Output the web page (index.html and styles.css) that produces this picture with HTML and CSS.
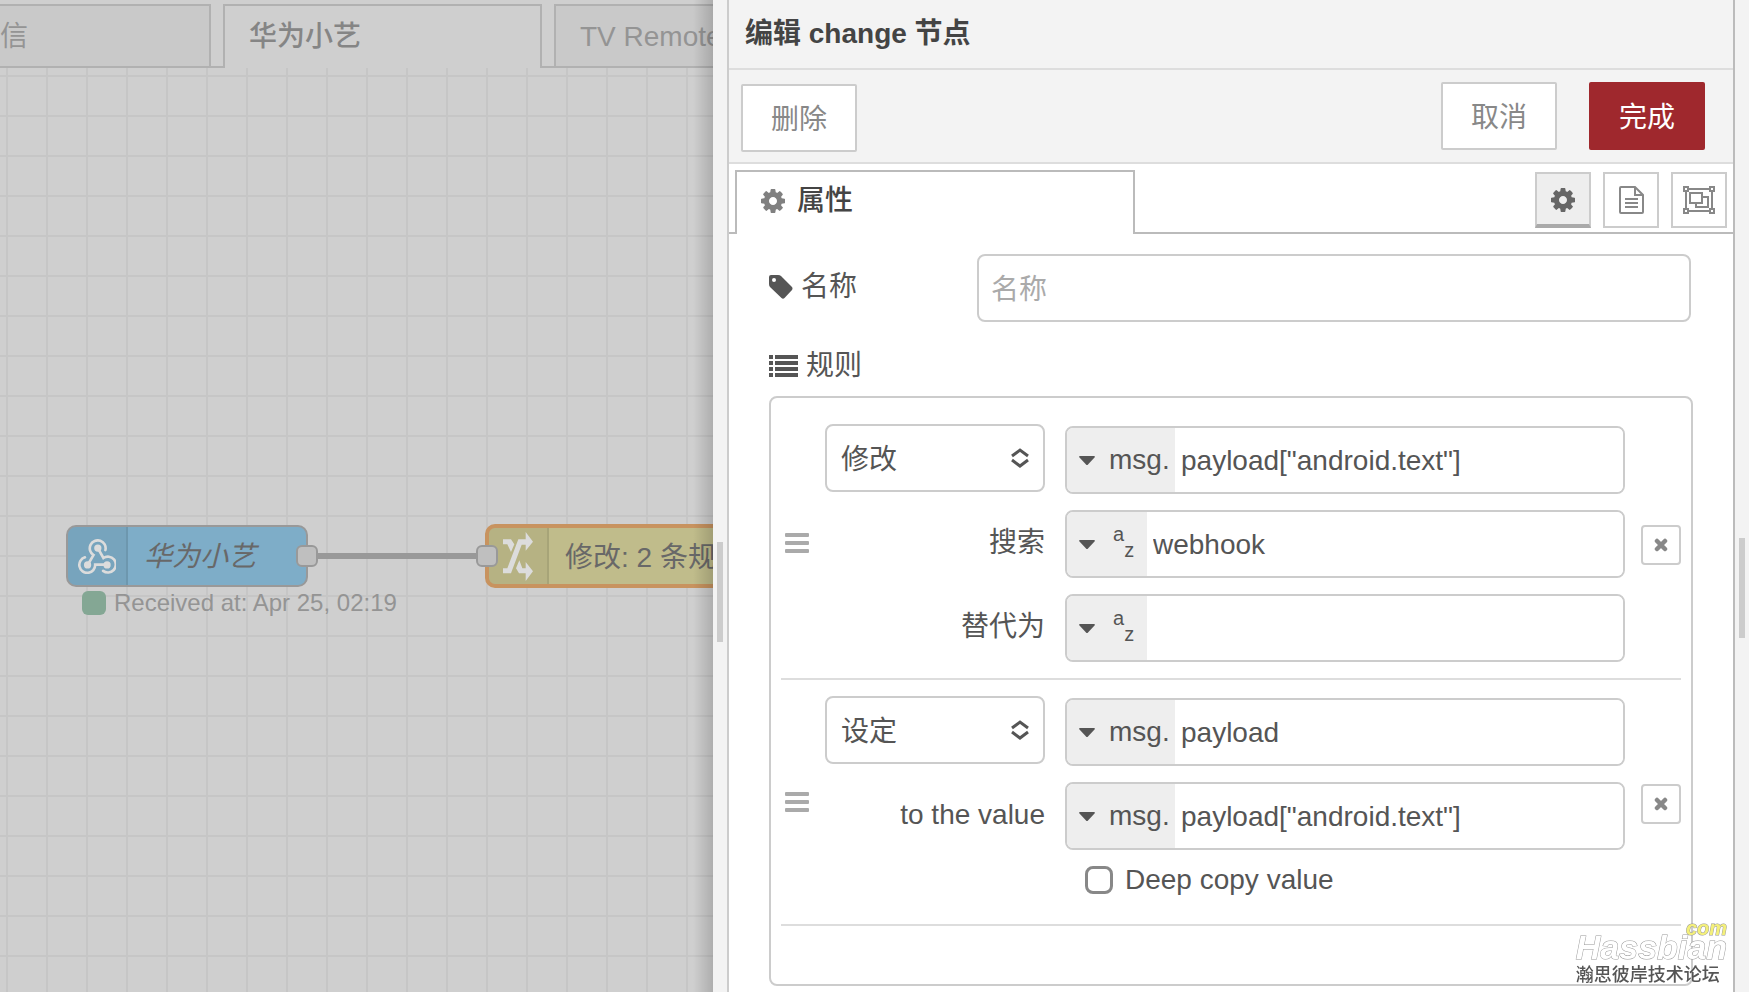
FILE: index.html
```html
<!DOCTYPE html>
<html lang="zh-CN">
<head>
<meta charset="utf-8">
<title>编辑 change 节点</title>
<link rel="stylesheet" href="styles.css">
</head>
<body>
<svg class="defs" aria-hidden="true">
  <symbol id="cog" viewBox="0 128 1536 1536"><path d="M1024 896q0-106-75-181t-181-75-181 75-75 181 75 181 181 75 181-75 75-181zm512-109v222q0 12-8 23t-20 13l-185 28q-19 54-39 91 35 50 107 138 10 12 10 25t-9 23q-27 37-99 108t-94 71q-12 0-26-9l-138-108q-44 23-91 38-16 136-29 186-7 28-36 28h-222q-14 0-24.500-8.500t-11.500-21.500l-28-184q-49-16-90-37l-141 107q-10 9-25 9-14 0-25-11-126-114-165-168-7-10-7-23 0-12 8-23 15-21 51-66.500t54-70.500q-27-50-41-99l-183-27q-13-2-21-12.500t-8-23.500v-222q0-12 8-23t19-13l186-28q14-46 39-92-40-57-107-138-10-12-10-24 0-10 9-23 26-36 98.500-107.500t94.500-71.500q13 0 26 10l138 107q44-23 91-38 16-136 29-186 7-28 36-28h222q14 0 24.500 8.500t11.500 21.500l28 184q49 16 90 37l142-107q9-9 24-9 13 0 25 10 129 119 165 170 7 8 7 22 0 12-8 23-15 21-51 66.500t-54 70.500q26 50 41 98l183 28q13 2 21 12.500t8 23.500z"/></symbol>
  <symbol id="caret" viewBox="0 0 16 9"><path d="M1 0h14q1.500.3.500 1.500L9 8.500q-1 1-2 0L.5 1.500Q-.5.3 1 0z"/></symbol>
  <symbol id="bars" viewBox="0 0 24 20"><rect width="24" height="4" rx="1"/><rect y="8" width="24" height="4" rx="1"/><rect y="16" width="24" height="4" rx="1"/></symbol>
  <symbol id="cross" viewBox="0 0 14 14"><path d="M3 3l8 8M11 3l-8 8" fill="none" stroke="currentColor" stroke-width="4.500" stroke-linecap="round"/></symbol>
</svg>
<div class="editor">
  <main class="workspace">
    <nav class="flow-tabs">
      <a class="flow-tab flow-tab-first" href="#">信</a>
      <a class="flow-tab flow-tab-active" href="#">华为小艺</a>
      <a class="flow-tab flow-tab-last" href="#">TV Remote</a>
    </nav>
    <div class="canvas">
      <div class="wire"></div>
      <div class="node node-webhook">
        <span class="node-icon"><svg width="38" height="35" viewBox="0 0 115 105" fill="none" stroke="#dcdcdc" stroke-width="8" stroke-linecap="round"><path d="M83 33A24 24 0 1 0 47 48L30 77"/><path d="M60 27L77 57A24 24 0 1 1 76 96"/><path d="M87 77H52A24 24 0 1 1 21 55"/><g fill="#dcdcdc" stroke="none"><circle cx="60" cy="27" r="11"/><circle cx="29" cy="78" r="11"/><circle cx="88" cy="78" r="11"/></g></svg></span>
        <span class="node-label"><em>华为小艺</em></span>
      </div>
      <div class="port port-out"></div>
      <div class="node node-change">
        <span class="node-icon"><svg width="30" height="49" viewBox="0 0 90 147" fill="#dcdcdc"><path d="M0 124V109H13L46 22H68V0L90 29 68 56V38H56L24 124z"/><path d="M0 22H24L34 37 24 60 13 37H0z"/><path d="M49 85L58 109H68V90L90 118 68 147V124H48L39 109z"/></svg></span>
        <span class="node-label">修改: 2 条规则</span>
      </div>
      <div class="port port-in"></div>
      <div class="status"><i class="status-dot"></i>Received at: Apr 25, 02:19</div>
    </div>
  </main>
  <div class="splitter"></div>
  <section class="tray">
    <h1 class="tray-title">编辑 change 节点</h1>
    <div class="toolbar">
      <button class="btn btn-delete">删除</button>
      <button class="btn">取消</button>
      <button class="btn btn-primary">完成</button>
    </div>
    <div class="tabs">
      <div class="tab"><svg class="tab-icon" width="24" height="24"><use href="#cog"/></svg>属性</div>
      <div class="tab-tools">
        <button class="tool tool-on" aria-label="属性"><svg width="24" height="24"><use href="#cog"/></svg></button>
        <button class="tool" aria-label="描述"><svg width="25" height="28" viewBox="0 0 25 28" fill="none" stroke="currentColor" stroke-width="2"><path d="M2 1H16L24 9V26Q24 27 23 27H2Q1 27 1 26V2Q1 1 2 1zM16 1V9H24M6 13H19M6 17H19M6 21H19"/></svg></button>
        <button class="tool" aria-label="外观"><svg width="32" height="28" viewBox="0 0 32 28" fill="none" stroke="currentColor" stroke-width="2"><path d="M6 3H26M6 25H26M3 6V22M29 6V22M1 1H5V5H1zM27 1H31V5H27zM1 23H5V27H1zM27 23H31V27H27zM7 7H19V17H7zM20 11H25V21H13V18"/></svg></button>
      </div>
    </div>
    <form class="form">
      <div class="name-row">
        <label class="form-label name-label" for="name"><svg width="24" height="24" viewBox="0 0 24 24"><path fill-rule="evenodd" d="M0 2Q0 0 2 0H9Q11 0 12 1L23 12Q24 13.500 23 15L15.500 23Q14 24.500 12.500 23L1 12Q0 11 0 9zM5 3A2 2 0 1 0 5 7A2 2 0 1 0 5 3z"/></svg>名称</label>
        <input class="name-input" id="name" type="text" placeholder="名称">
      </div>
      <div class="form-label rules-label"><svg width="29" height="22" viewBox="0 0 29 22"><path d="M0 0H4V4H0zM6 0H29V4H6zM0 6H4V10H0zM6 6H29V10H6zM0 12H4V16H0zM6 12H29V16H6zM0 18H4V22H0zM6 18H29V22H6z"/></svg>规则</div>
      <ol class="rules">
        <li class="rule">
          <svg class="handle" width="24" height="20"><use href="#bars"/></svg>
          <div class="rule-body">
            <div class="rule-row rule-head">
              <div class="select-wrap"><select class="select" aria-label="操作"><option>修改</option></select><svg class="select-arrows" width="18" height="20" viewBox="0 0 18 20"><path d="M1 8L9 2L17 8M1 12L9 18L17 12"/></svg></div>
              <div class="typed"><button type="button" class="type"><svg width="16" height="9"><use href="#caret"/></svg>msg.</button><input class="value" type="text" aria-label="属性" value='payload["android.text"]'></div>
            </div>
            <div class="rule-row">
              <label class="rule-label" for="from">搜索</label>
              <div class="typed"><button type="button" class="type type-str"><svg width="16" height="9"><use href="#caret"/></svg><span class="az"><span>a</span><span>z</span></span></button><input class="value" id="from" type="text" value="webhook"></div>
            </div>
            <div class="rule-row">
              <label class="rule-label" for="to">替代为</label>
              <div class="typed"><button type="button" class="type type-str"><svg width="16" height="9"><use href="#caret"/></svg><span class="az"><span>a</span><span>z</span></span></button><input class="value" id="to" type="text"></div>
            </div>
          </div>
          <button type="button" class="remove" aria-label="删除规则"><svg width="14" height="14"><use href="#cross"/></svg></button>
        </li>
        <li class="rule">
          <svg class="handle" width="24" height="20"><use href="#bars"/></svg>
          <div class="rule-body">
            <div class="rule-row rule-head">
              <div class="select-wrap"><select class="select" aria-label="操作"><option>设定</option></select><svg class="select-arrows" width="18" height="20" viewBox="0 0 18 20"><path d="M1 8L9 2L17 8M1 12L9 18L17 12"/></svg></div>
              <div class="typed"><button type="button" class="type"><svg width="16" height="9"><use href="#caret"/></svg>msg.</button><input class="value" type="text" aria-label="属性" value="payload"></div>
            </div>
            <div class="rule-row">
              <label class="rule-label" for="val">to the value</label>
              <div class="typed"><button type="button" class="type"><svg width="16" height="9"><use href="#caret"/></svg>msg.</button><input class="value" id="val" type="text" value='payload["android.text"]'></div>
            </div>
            <label class="deep"><input class="check" type="checkbox">Deep copy value</label>
          </div>
          <button type="button" class="remove" aria-label="删除规则"><svg width="14" height="14"><use href="#cross"/></svg></button>
        </li>
      </ol>
    </form>
  </section>
  <div class="splitter splitter-right"></div>
</div>
<div class="watermark">
  <span class="mark-com">com</span>
  <span class="mark-name">Hassbian</span>
  <span class="mark-sub">瀚思彼岸技术论坛</span>
</div>
</body>
</html>
```
FILE: styles.css
```css
* { box-sizing: border-box; }

body {
  margin: 0;
  font: 400 28px/40px "Liberation Sans", "Noto Sans CJK SC", sans-serif;
  color: #555;
  background: #f3f3f3;
}

button, input, select { font: inherit; color: inherit; margin: 0; }
button { padding: 0; }
svg { flex: none; }
.tray svg { color: inherit; }
.tray { fill: currentColor; }
.defs { position: absolute; width: 0; height: 0; }

.editor {
  display: grid;
  grid-template-columns: minmax(0, 713fr) 16px minmax(0, 1004fr) 16px;
  height: 100vh;
  overflow: hidden;
}

/* workspace */
.workspace {
  position: relative;
  display: flex;
  flex-direction: column;
  overflow: hidden;
  background: #cfcfcf;
}
.workspace::after {
  content: "";
  position: absolute;
  inset: 0 0 0 auto;
  width: 20px;
  background: linear-gradient(to right, transparent, rgba(0, 0, 0, .16));
}
.flow-tabs {
  display: flex;
  gap: 12px;
  flex: none;
  height: 68px;
  padding-top: 4px;
  box-shadow: inset 0 -2px #b1b1b1;
}
.flow-tab {
  flex: none;
  width: 319px;
  padding: 11px 24px;
  border: 2px solid #b1b1b1;
  background: #c9c9c9;
  color: #949494;
  text-decoration: none;
  white-space: nowrap;
}
.flow-tab-first { width: 211px; padding-left: 0; border-left: 0; }
.flow-tab-active { border-bottom: 0; background: #cfcfcf; color: #858585; font-weight: 500; }

.canvas {
  position: relative;
  flex: 1;
  background:
    linear-gradient(to right, #c6c6c6 2px, transparent 2px) 6px 0 / 40px 40px,
    linear-gradient(#c6c6c6 2px, transparent 2px) 0 7px / 40px 40px;
}
.wire { position: absolute; left: 310px; top: 485px; width: 176px; height: 6px; background: #999; }
.node {
  position: absolute;
  display: flex;
  align-items: stretch;
  width: 242px;
  height: 62px;
  border: 2px solid #999;
  border-radius: 10px;
  overflow: hidden;
  color: #686868;
}
.node-webhook { left: 66px; top: 457px; background: #7eadc8; }
.node-change { left: 485px; top: 456px; width: 300px; height: 64px; border: 4px solid #c8935f; background: #c0bc8b; }
.node-icon {
  display: flex;
  flex: none;
  width: 60px;
  align-items: center;
  justify-content: center;
  background: rgba(0, 0, 0, .05);
  border-right: 2px solid rgba(0, 0, 0, .08);
}
.node-label { padding: 10px 16px; white-space: nowrap; }
.port { position: absolute; top: 477px; width: 22px; height: 22px; border: 2px solid #999; border-radius: 6px; background: #bfbfbf; }
.port-out { left: 296px; }
.port-in { left: 476px; }
.status { position: absolute; left: 82px; top: 515px; display: flex; align-items: center; gap: 8px; font-size: 24px; color: #949494; white-space: nowrap; }
.status-dot { width: 24px; height: 24px; border-radius: 6px; background: #84a794; }

/* drag bars */
.splitter {
  display: flex;
  align-items: center;
  padding: 192px 0 0 4px;
  border-right: 2px solid #ccc;
  background: #f3f3f3;
}
.splitter::before { content: ""; width: 6px; height: 100px; background: #ccc; }
.splitter-right { border-right: 0; border-left: 2px solid #bbb; padding: 184px 0 0 4px; }

/* tray */
.tray { display: flex; flex-direction: column; min-width: 0; background: #fff; }
.tray-title {
  margin: 0;
  padding: 14px 16px;
  border-bottom: 2px solid #ddd;
  background: #f3f3f3;
  color: #444;
  font-size: 28px;
  font-weight: 700;
}
.toolbar {
  display: flex;
  gap: 32px;
  padding: 12px 28px 10px 12px;
  border-bottom: 2px solid #ddd;
  background: #f3f3f3;
}
.btn {
  width: 116px;
  height: 68px;
  padding-top: 4px;
  border: 2px solid #ccc;
  border-radius: 2px;
  background: #fff;
  color: #888;
}
.btn-delete { margin: 2px auto 0 0; }
.btn-primary { border-color: #9f282d; background: #9f282d; color: #fff; }

.tabs {
  display: flex;
  justify-content: space-between;
  height: 70px;
  padding: 6px 6px 0;
  box-shadow: inset 0 -2px #bbb;
}
.tab {
  display: flex;
  align-items: center;
  gap: 12px;
  width: 400px;
  padding: 0 24px 4px;
  border: 2px solid #bbb;
  border-bottom: 0;
  background: #fff;
  color: #444;
  font-weight: 500;
}
.tray .tab-icon { color: #808080; fill: #808080; }
.tab-tools { display: flex; gap: 12px; padding-top: 2px; }
.tool {
  display: flex;
  align-items: center;
  justify-content: center;
  width: 56px;
  height: 56px;
  border: 2px solid #ccc;
  background: #fff;
  color: #888;
}
.tool-on { padding-top: 2px; border-bottom: 4px solid #aaa; background: #eee; fill: #666; }

.form { display: flex; flex: 1; flex-direction: column; padding: 20px 40px 6px; }
.form-label { display: flex; align-items: center; }
.name-row { display: flex; padding-right: 2px; }
.name-label { width: 208px; gap: 8px; flex: none; padding: 0 0 2px; }
.name-input {
  flex: 1;
  min-width: 0;
  height: 68px;
  padding: 4px 12px 0;
  border: 2px solid #ccc;
  border-radius: 8px;
  background: #fff;
}
.name-input::placeholder { color: #aaa; opacity: 1; }
.rules-label { gap: 8px; margin: 24px 0 10px; }

.rules {
  flex: 1;
  margin: 0;
  padding: 10px;
  border: 2px solid #ccc;
  border-radius: 8px;
  list-style: none;
}
.rule {
  display: flex;
  align-items: center;
  gap: 16px;
  padding: 16px 0 16px 4px;
  border-bottom: 2px solid #ddd;
}
.handle { fill: #aaa; }
.rule-body { display: flex; flex: 1; flex-direction: column; gap: 16px; min-width: 0; }
.rule-row { display: grid; grid-template-columns: 220px minmax(0, 1fr); gap: 20px; }
.rule-label { padding-top: 13px; text-align: right; }
.rule-head .typed { margin-top: 2px; }
.select-wrap { position: relative; height: 68px; }
.select {
  width: 100%;
  height: 100%;
  padding: 4px 14px 0;
  border: 2px solid #ccc;
  border-radius: 8px;
  background: #fff;
  appearance: none;
}
.select-arrows { position: absolute; right: 16px; top: 24px; fill: none; stroke: #555; stroke-width: 3; pointer-events: none; }
.typed {
  display: flex;
  height: 68px;
  border: 2px solid #ccc;
  border-radius: 8px;
  overflow: hidden;
}
.type {
  display: flex;
  align-items: center;
  gap: 14px;
  flex: none;
  width: 108px;
  padding-left: 12px;
  border: 0;
  background: #eee;
}
.type-str { width: 80px; gap: 18px; }
.az { display: flex; font-size: 20px; line-height: 20px; }
.az span:first-child { padding-bottom: 20px; }
.az span:last-child { padding-top: 16px; }
.value { flex: 1; min-width: 0; padding: 2px 6px 0; border: 0; background: #fff; outline: 0; }
.deep { display: flex; align-items: flex-start; gap: 12px; height: 42px; margin-left: 260px; line-height: 28px; }
.check {
  width: 28px;
  height: 28px;
  border: 3px solid #888;
  border-radius: 8px;
  background: #fff;
  appearance: none;
}
.remove {
  display: flex;
  align-items: center;
  justify-content: center;
  flex: none;
  width: 40px;
  height: 40px;
  margin-top: 3px;
  border: 2px solid #ccc;
  border-radius: 4px;
  background: #fff;
  color: #888;
}

.watermark {
  position: fixed;
  right: 22px;
  bottom: 6px;
  display: flex;
  flex-direction: column;
  color: #555;
  font-weight: 500;
}
.mark-com, .mark-name { font-weight: 700; font-style: italic; -webkit-text-stroke: 1px #999; paint-order: stroke fill; }
.mark-com { align-self: flex-end; font-size: 20px; line-height: 12px; color: #f4f07a; }
.mark-name { font-size: 34px; line-height: 26px; color: #fff; }
.mark-sub { padding-top: 4px; font-size: 18px; line-height: 22px; }
```
